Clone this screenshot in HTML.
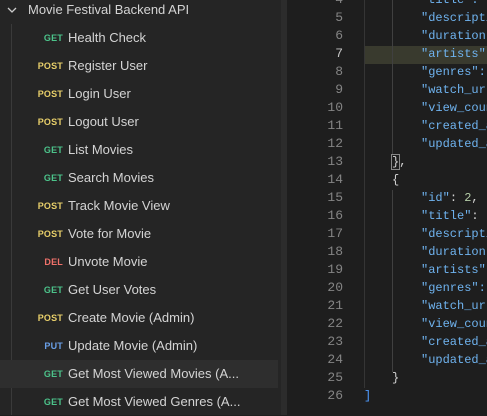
<!DOCTYPE html>
<html><head><style>
*{margin:0;padding:0;box-sizing:border-box}
body{width:487px;height:415px;overflow:hidden;background:#1e1e1e;position:relative;font-family:"Liberation Sans",sans-serif}
#side{position:absolute;left:0;top:0;width:281px;height:415px;background:#252525}
#strip{position:absolute;left:281px;top:0;width:6px;height:415px;background:#2c2c2c}
#tree{position:absolute;left:11px;top:24px;width:1px;height:391px;background:#3a3a3a}
.row{position:absolute;left:0;width:278px;height:28px;font-size:13px;color:#d4d4d4;line-height:28px}
.m{position:absolute;right:215px;font-size:9px;font-weight:bold;letter-spacing:0.2px}
.t{position:absolute;left:68px}
.g{color:#4cc38a}.p{color:#e8cf6a}.u{color:#6aa0e8}.d{color:#f0716a}
.ln{position:absolute;left:290px;width:53px;text-align:right;font:13px "Liberation Mono",monospace;color:#858585;height:18px;line-height:18px}
.cd{position:absolute;font:12px "Liberation Mono",monospace;color:#6fb3ef;height:18px;line-height:18px;white-space:pre}
</style></head><body>
<div id="side"></div><div id="strip"></div><div id="tree"></div>
<div class="row" style="top:-4px"><svg style="position:absolute;left:7px;top:10px" width="10" height="8"><path d="M1 2 L5 6 L9 2" stroke="#ccc" stroke-width="1.3" fill="none"/></svg><span style="position:absolute;left:28px">Movie Festival Backend API</span></div>
<div class="row" style="top:24px"><span class="m g">GET</span><span class="t">Health Check</span></div>
<div class="row" style="top:52px"><span class="m p">POST</span><span class="t">Register User</span></div>
<div class="row" style="top:80px"><span class="m p">POST</span><span class="t">Login User</span></div>
<div class="row" style="top:108px"><span class="m p">POST</span><span class="t">Logout User</span></div>
<div class="row" style="top:136px"><span class="m g">GET</span><span class="t">List Movies</span></div>
<div class="row" style="top:164px"><span class="m g">GET</span><span class="t">Search Movies</span></div>
<div class="row" style="top:192px"><span class="m p">POST</span><span class="t">Track Movie View</span></div>
<div class="row" style="top:220px"><span class="m p">POST</span><span class="t">Vote for Movie</span></div>
<div class="row" style="top:248px"><span class="m d">DEL</span><span class="t">Unvote Movie</span></div>
<div class="row" style="top:276px"><span class="m g">GET</span><span class="t">Get User Votes</span></div>
<div class="row" style="top:304px"><span class="m p">POST</span><span class="t">Create Movie (Admin)</span></div>
<div class="row" style="top:332px"><span class="m u">PUT</span><span class="t">Update Movie (Admin)</span></div>
<div class="row" style="top:360px;background:#2e2e2e"><span class="m g">GET</span><span class="t">Get Most Viewed Movies (A...</span></div>
<div class="row" style="top:388px"><span class="m g">GET</span><span class="t">Get Most Viewed Genres (A...</span></div>

<div style="position:absolute;left:364px;top:46px;width:123px;height:18px;background:#393a2e"></div>
<div style="position:absolute;left:392px;top:0;width:1px;height:154px;background:#404040"></div>
<div style="position:absolute;left:392px;top:190px;width:1px;height:182px;background:#404040"></div>
<div style="position:absolute;left:364px;top:0;width:1px;height:388px;background:#353535"></div>

<div class="ln" style="top:-9px">4</div><div class="ln" style="top:9px">5</div><div class="ln" style="top:27px">6</div><div class="ln" style="top:45px;color:#c6c6c6">7</div><div class="ln" style="top:63px">8</div><div class="ln" style="top:81px">9</div><div class="ln" style="top:99px">10</div><div class="ln" style="top:117px">11</div><div class="ln" style="top:135px">12</div><div class="ln" style="top:153px">13</div><div class="ln" style="top:171px">14</div><div class="ln" style="top:189px">15</div><div class="ln" style="top:207px">16</div><div class="ln" style="top:225px">17</div><div class="ln" style="top:243px">18</div><div class="ln" style="top:261px">19</div><div class="ln" style="top:279px">20</div><div class="ln" style="top:297px">21</div><div class="ln" style="top:315px">22</div><div class="ln" style="top:333px">23</div><div class="ln" style="top:351px">24</div><div class="ln" style="top:369px">25</div><div class="ln" style="top:387px">26</div>

<div class="cd" style="left:421px;top:-9px">"title":</div>
<div class="cd" style="left:421px;top:9px">"description</div>
<div class="cd" style="left:421px;top:27px">"duration</div>
<div class="cd" style="left:421px;top:45px">"artists"</div>
<div class="cd" style="left:421px;top:63px">"genres":</div>
<div class="cd" style="left:421px;top:81px">"watch_url</div>
<div class="cd" style="left:421px;top:99px">"view_count</div>
<div class="cd" style="left:421px;top:117px">"created_a</div>
<div class="cd" style="left:421px;top:135px">"updated_a</div>
<div class="cd" style="left:392px;top:153px;color:#d4d4d4"><span style="outline:1px solid #888">}</span>,</div>
<div class="cd" style="left:392px;top:171px;color:#d4d4d4">{</div>
<div class="cd" style="left:421px;top:189px">"id"<span style="color:#d4d4d4">: </span><span style="color:#b5cea8">2</span><span style="color:#d4d4d4">,</span></div>
<div class="cd" style="left:421px;top:207px">"title"<span style="color:#d4d4d4">:</span></div>
<div class="cd" style="left:421px;top:225px">"descripti</div>
<div class="cd" style="left:421px;top:243px">"duration</div>
<div class="cd" style="left:421px;top:261px">"artists"</div>
<div class="cd" style="left:421px;top:279px">"genres":</div>
<div class="cd" style="left:421px;top:297px">"watch_url</div>
<div class="cd" style="left:421px;top:315px">"view_coun</div>
<div class="cd" style="left:421px;top:333px">"created_a</div>
<div class="cd" style="left:421px;top:351px">"updated_a</div>
<div class="cd" style="left:392px;top:369px;color:#d4d4d4">}</div>
<div class="cd" style="left:364px;top:387px;color:#4f9bff">]</div>
</body></html>
